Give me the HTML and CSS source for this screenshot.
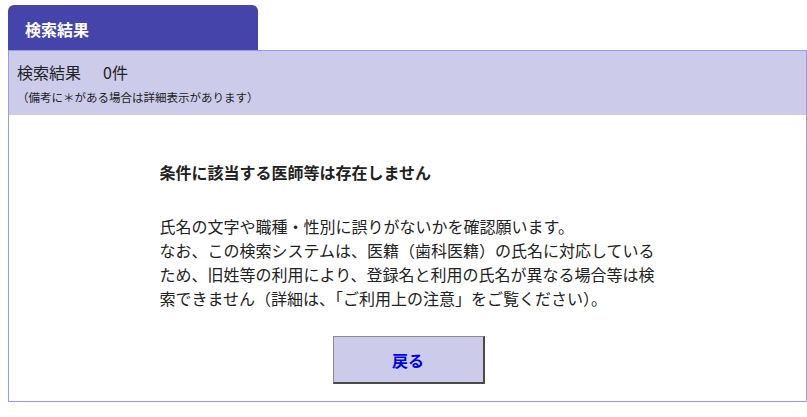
FILE: index.html
```html
<!DOCTYPE html>
<html lang="ja">
<head>
<meta charset="UTF-8">
<meta name="viewport" content="width=device-width, initial-scale=1.0">
<title>検索結果</title>
<link rel="stylesheet" href="styles.css">
</head>
<body>

<div class="tab">検索結果</div>

<div class="result-box">
  <!-- 件数 -->
  <div class="result-head">
    <p class="result-count">検索結果<span class="count-num">0件</span></p>
    <p class="result-note">（備考に＊がある場合は詳細表示があります）</p>
  </div>

  <div class="result-body">
    <div class="message">
      <h2>条件に該当する医師等は存在しません</h2>
      <p>氏名の文字や職種・性別に誤りがないかを確認願います。<br>なお、この検索システムは、医籍（歯科医籍）の氏名に対応しているため、旧姓等の利用により、登録名と利用の氏名が異なる場合等は検索できません（詳細は、「ご利用上の注意」をご覧ください）。</p>
    </div>
    <div class="actions">
      <button type="button" class="back-btn">戻る</button>
    </div>
  </div>
</div>

</body>
</html>
```

FILE: styles.css
```css
body {
  margin: 5px 0 0 8px;
  font-family: "Noto Sans CJK JP", "Noto Sans", sans-serif;
  color: #222;
  background: #fff;
}

p, h2 {
  margin: 0;
}

.tab {
  width: 233px;
  height: 45px;
  padding-left: 17px;
  background: #4444aa;
  color: #fff;
  font-size: 16px;
  font-weight: bold;
  line-height: 48px;
  border-radius: 6px 6px 0 0;
}

.result-box {
  width: 797px;
  border: 1px solid #9999ee;
}

.result-head {
  background: #ccccea;
  padding: 10px 8px 10px 8px;
}

.result-count {
  font-size: 16px;
  line-height: 22px;
}

.count-num {
  margin-left: 22px;
}

.result-note {
  font-size: 11.5px;
  line-height: 16px;
  margin-top: 6px;
}

.result-body {
  padding: 45px 0 17px;
}

.message {
  width: 496px;
  margin: 0 auto;
}

.message h2 {
  font-size: 16px;
  font-weight: bold;
  line-height: 24px;
}

.message p {
  font-size: 16px;
  line-height: 24px;
  margin-top: 30px;
}

.actions {
  display: flex;
  justify-content: center;
  margin-top: 26px;
  padding-left: 2px;
}

.back-btn {
  width: 152px;
  height: 48px;
  background: #ccccea;
  color: #0000e6;
  font-family: inherit;
  font-size: 16px;
  font-weight: bold;
  border-top: 1px solid #8c8c8c;
  border-left: 1px solid #8c8c8c;
  border-right: 2px solid #4a4a4a;
  border-bottom: 2px solid #4a4a4a;
  cursor: pointer;
}
```
